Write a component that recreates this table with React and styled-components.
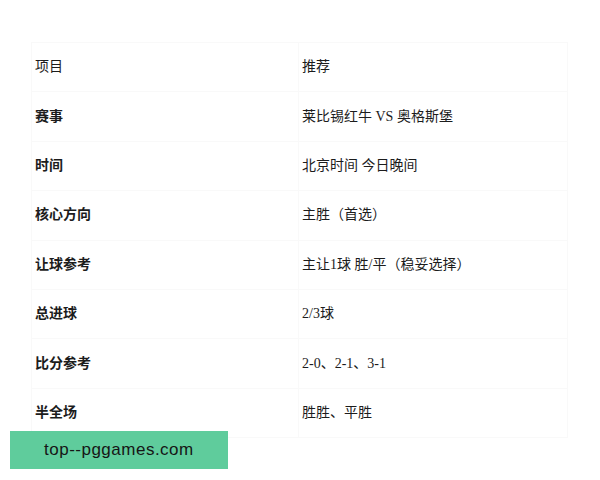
import styled, { createGlobalStyle } from 'styled-components';

const GlobalStyle = createGlobalStyle`
    body {
        margin: 0;
        background: #fff;
    }
`;

const rows = [
    ['项目', '推荐', true],
    ['赛事', '莱比锡红牛 VS 奥格斯堡'],
    ['时间', '北京时间 今日晚间'],
    ['核心方向', '主胜（首选）'],
    ['让球参考', '主让1球 胜/平（稳妥选择）'],
    ['总进球', '2/3球'],
    ['比分参考', '2-0、2-1、3-1'],
    ['半全场', '胜胜、平胜'],
];

const App = () => {
    return <Page>
        <GlobalStyle />
        <Table>
            {rows.map(([label, value, head]) => (
                <Row key={label}>
                    <Cell $bold={!head}>{label}</Cell>
                    <Cell>{value}</Cell>
                </Row>
            ))}
        </Table>
        <Watermark>top--pggames.com</Watermark>
    </Page>
};

const Page = styled.div`
    position: relative;
    width: 600px;
    height: 480px;
    padding: 42px 0 0 31px;
    box-sizing: border-box;
    font-family: "Liberation Serif", "Noto Sans CJK SC", serif;
    color: #1c1c1c;
`;

const Table = styled.div`
    width: 536px;
    display: flex;
    flex-direction: column;
    border-top: 1px solid #f9f9f9;
    border-left: 1px solid #f9f9f9;
`;

const Row = styled.div`
    display: grid;
    grid-template-columns: 267px 1fr;
    height: 49.4px;
    box-sizing: border-box;
    border-bottom: 1px solid #f9f9f9;
`;

const Cell = styled.div`
    display: flex;
    align-items: center;
    padding: 0 0 4px 3px;
    font-size: 14px;
    font-weight: ${p => p.$bold ? 700 : 400};
    border-right: 1px solid #f9f9f9;
`;

const Watermark = styled.div`
    position: absolute;
    left: 10px;
    top: 431px;
    width: 218px;
    height: 38px;
    background: #5fcc9c;
    display: flex;
    align-items: center;
    padding-left: 34px;
    box-sizing: border-box;
    font-family: "Liberation Sans", Arial, sans-serif;
    font-size: 17px;
    letter-spacing: 0.5px;
    color: #161616;
`;

export default App;
